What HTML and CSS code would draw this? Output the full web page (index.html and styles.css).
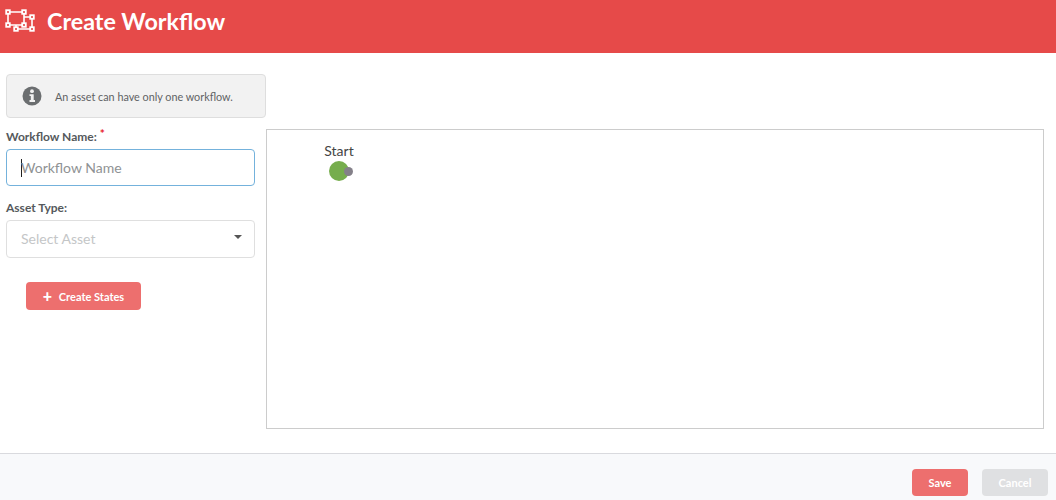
FILE: index.html
```html
<!DOCTYPE html>
<html lang="en">
<head>
    <meta charset="UTF-8">
    <title>Create Workflow</title>
    <link rel="stylesheet" href="styles.css">
</head>
<body>
    <header class="topbar">
        <svg class="topbar-icon" width="34" height="24" viewBox="0 0 34 24" fill="none" stroke="#fff">
            <path stroke-width="1.6" d="M5 4H21V17H5ZM21 9H29V21H13V17"/>
            <g fill="#e64a49" stroke-width="1.800">
                <rect x="3.200" y="2.200" width="3.600" height="3.600"/>
                <rect x="19.200" y="2.200" width="3.600" height="3.600"/>
                <rect x="3.200" y="15.200" width="3.600" height="3.600"/>
                <rect x="19.200" y="15.200" width="3.600" height="3.600"/>
                <rect x="27.200" y="7.200" width="3.600" height="3.600"/>
                <rect x="11.200" y="19.200" width="3.600" height="3.600"/>
                <rect x="27.200" y="19.200" width="3.600" height="3.600"/>
            </g>
        </svg>
        <h1 class="topbar-title">Create Workflow</h1>
    </header>

    <main class="content">
        <div class="side">
            <div class="notice">
                <svg class="notice-icon" width="20" height="20" viewBox="0 0 20 20">
                    <circle cx="10" cy="10" r="9.500" fill="#6b6e70"/>
                    <circle cx="10" cy="5.200" r="1.900" fill="#f2f2f2"/>
                    <path fill="#f2f2f2" d="M7.500 8.200H11.700V14H13V16H7.500V14H8.800V10.100H7.500Z"/>
                </svg>
                <span>An asset can have only one workflow.</span>
            </div>
            <form class="form">
                <label class="label" for="name">Workflow Name: <sup class="req">*</sup></label>
                <div class="input input-focus" id="name"><i class="caret"></i>Workflow Name</div>
                <label class="label label-asset">Asset Type:</label>
                <div class="input input-select">
                    <span>Select Asset</span>
                    <i class="arrow"></i>
                </div>
                <button type="button" class="btn btn-states"><b class="plus">+</b> Create States</button>
            </form>
        </div>
        <section class="canvas">
            <div class="node">
                <div class="node-label">Start</div>
                <div class="node-dot"><i class="node-port"></i></div>
            </div>
        </section>
    </main>

    <footer class="footer">
        <button type="button" class="btn btn-save">Save</button>
        <button type="button" class="btn btn-cancel">Cancel</button>
    </footer>
</body>
</html>
```

FILE: styles.css
```css
*, *:before, *:after {
    box-sizing: border-box;
}
html, body {
    height: 100%;
}
body {
    margin: 0;
    height: 500px;
    overflow: hidden;
    display: flex;
    flex-direction: column;
    background: #fff;
    color: #555;
    font-family: "Lato", sans-serif;
}
.topbar {
    height: 53px;
    flex: none;
    display: flex;
    align-items: flex-start;
    padding: 4px 0 0 3px;
    background: #e64a49;
    color: #fff;
}
.topbar-icon {
    flex: none;
    margin-top: 4px;
}
.topbar-title {
    margin: 0 0 0 10px;
    font-size: 23.300px;
    line-height: 34px;
    font-weight: 700;
}
.content {
    flex: 1;
    display: flex;
    padding: 21px 12px 0 6px;
}
.side {
    width: 260px;
    flex: none;
}
.notice {
    height: 44px;
    display: flex;
    align-items: center;
    padding-left: 15px;
    background: #f2f2f2;
    border: 1px solid #dedede;
    border-radius: 4px;
    font-size: 10.800px;
    color: #5f6264;
}
.notice-icon {
    margin-right: 13px;
    flex: none;
}
.form {
    width: 249px;
    padding-top: 10px;
}
.label {
    display: block;
    height: 21px;
    font-size: 12px;
    line-height: 17px;
    font-weight: 700;
    color: #55595c;
}
.label-asset {
    margin-top: 13px;
}
.req {
    color: #e8212b;
    font-size: 12px;
    line-height: 0;
    vertical-align: 3px;
}
.input {
    height: 37px;
    display: flex;
    align-items: center;
    padding-left: 14px;
    border: 1px solid #dfdfdf;
    border-radius: 4px;
    font-size: 14px;
    color: #8f9294;
    background: #fff;
}
.input-focus {
    border-color: #74b2dc;
}
.input-select {
    height: 38px;
    justify-content: space-between;
    padding-right: 12px;
    padding-bottom: 2px;
    color: #c4c6c7;
}
.caret {
    width: 1px;
    height: 18px;
    margin-right: -1px;
    background: #222;
}
.arrow {
    width: 0;
    height: 0;
    margin-bottom: 3px;
    border-left: 4px solid transparent;
    border-right: 4px solid transparent;
    border-top: 4px solid #555;
}
.btn {
    border: none;
    border-radius: 4px;
    color: #fff;
    font-family: "Lato", sans-serif;
    font-size: 11px;
    font-weight: 700;
    padding: 0;
}
.btn-states {
    display: block;
    width: 115px;
    height: 28px;
    margin: 24px 0 0 20px;
    background: #ed6f6e;
}
.plus {
    font-size: 16px;
    line-height: 11px;
    font-weight: 900;
    margin-right: 4px;
    vertical-align: -1px;
}
.canvas {
    position: relative;
    width: 778px;
    height: 300px;
    margin-top: 55px;
    border: 1px solid #ccc;
}
.node {
    position: absolute;
    left: 41px;
    top: 12px;
    width: 62px;
    text-align: center;
}
.node-label {
    font-size: 14px;
    line-height: 17px;
    color: #444;
}
.node-dot {
    position: relative;
    width: 20px;
    height: 20px;
    margin: 2px auto 0;
    border-radius: 50%;
    background: #76ad4d;
}
.node-port {
    position: absolute;
    right: -4px;
    top: 6px;
    width: 9px;
    height: 9px;
    border-radius: 50%;
    background: #848089;
}
.footer {
    height: 47px;
    flex: none;
    display: flex;
    justify-content: flex-end;
    gap: 14px;
    padding: 15px 8px 4px 0;
    border-top: 1px solid #d9dade;
    background: #f8f9fb;
}
.btn-save {
    width: 56px;
    background: #ed6f6e;
}
.btn-cancel {
    width: 66px;
    background: #dfe0e2;
}
```
